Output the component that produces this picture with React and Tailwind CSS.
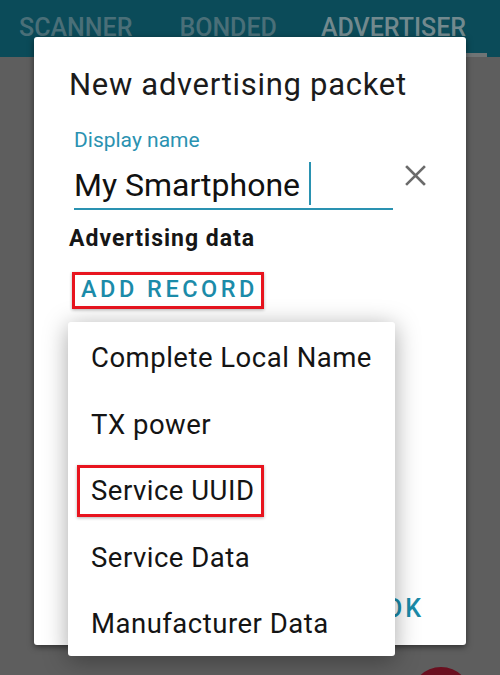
import React from "react";

export default function App() {
  const items = [
    "Complete Local Name",
    "TX power",
    "Service UUID",
    "Service Data",
    "Manufacturer Data",
  ];
  return (
    <div
      className="relative h-[675px] w-[500px] overflow-hidden bg-[#5e5e5e]"
      style={{ fontFamily: "Roboto, 'Noto Sans', sans-serif" }}
    >
      {/* app bar with tabs (dimmed) */}
      <div className="relative h-[57px] bg-[#0b4b59]">
        <div className="flex pt-[13px] text-[25px] font-medium leading-[30px] text-[#4a6f78]">
          <span className="ml-[19px]">SCANNER</span>
          <span className="ml-[47px]">BONDED</span>
          <span className="ml-[44px] text-[#72898e]">ADVERTISER</span>
        </div>
        <div className="absolute bottom-0 left-[322px] h-[4px] w-[165px] bg-[#6f7475]" />
      </div>

      {/* FAB */}
      <div className="absolute left-[411px] top-[667px] h-[60px] w-[60px] rounded-full bg-[#6a0f1f]" />

      {/* Dialog */}
      <div className="absolute left-[34px] top-[37px] h-[608px] w-[432px] rounded-[3px] bg-white shadow-[0_2px_6px_rgba(0,0,0,0.5)]">
        <div className="px-[35px] pt-[30px]">
          <div className="text-[31px] leading-[36px] tracking-[0.7px] text-[#1b1b1b]">New advertising packet</div>
          <div className="mt-[25px] flex items-start">
            <div className="ml-[5px] w-[319px]">
              <div className="text-[21px] leading-[24px] text-[#2a92b1]">Display name</div>
              <div className="flex h-[58px] items-end border-b-2 border-[#2a92b1] pb-[4px]">
                <span className="text-[32px] leading-[38px] text-[#111]">My Smartphone</span>
                <span className="-mb-[1px] ml-[9px] h-[43px] w-[2px] bg-[#2a92b1]" />
              </div>
            </div>
            <div className="ml-[12px] mt-[37px]">
              <svg width="21" height="21" viewBox="0 0 21 21">
                <path d="M2 2 L19 19 M19 2 L2 19" stroke="#6b6b6b" strokeWidth="2.6" strokeLinecap="square" fill="none" />
              </svg>
            </div>
          </div>
          <div className="mt-[15px] text-[23px] font-bold leading-[28px] tracking-[1px] text-[#161616]">Advertising data</div>
          <div className="ml-[3px] mt-[19px] w-[192px] border-[3px] border-[#e8141e] px-[6px] pb-[3px] text-[23.5px] font-medium leading-[28px] tracking-[3.5px] whitespace-nowrap text-[#1b8ba9] shadow-[0_1px_3px_rgba(0,0,0,0.3)]">
            ADD RECORD
          </div>
        </div>
        <div className="absolute left-[351px] top-[558px] text-[25px] font-medium leading-[28px] tracking-[3px] text-[#1b8ba9]">OK</div>
      </div>

      {/* Popup menu */}
      <div className="absolute left-[68px] top-[322px] h-[334px] w-[327px] rounded-[3px] bg-white shadow-[0_4px_24px_rgba(0,0,0,0.35)]">
        <div className="flex flex-col pt-[3px]">
          {items.map((t) => (
            <div key={t} className="flex h-[66.5px] items-center pl-[23px]">
              {t === "Service UUID" ? (
                <span className="-ml-[14px] h-[52px] w-[187px] border-[3px] border-[#e8141e] pl-[11px] pt-[6px] text-[27.5px] leading-[34px] tracking-[0.5px] whitespace-nowrap text-[#141414] shadow-[0_1px_3px_rgba(0,0,0,0.3)]">
                  {t}
                </span>
              ) : (
                <span className="text-[27.5px] leading-[34px] tracking-[0.5px] text-[#141414]">{t}</span>
              )}
            </div>
          ))}
        </div>
      </div>
    </div>
  );
}
